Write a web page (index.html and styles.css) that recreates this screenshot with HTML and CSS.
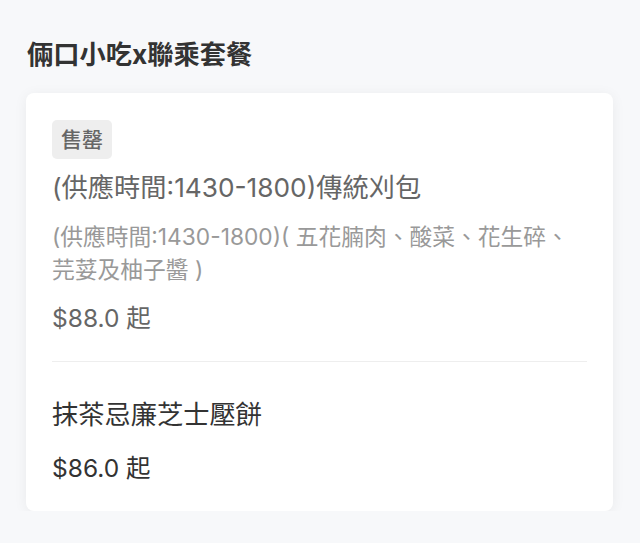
FILE: index.html
```html
<!DOCTYPE html>
<html lang="zh-Hant">
<head>
<meta charset="utf-8">
<link rel="stylesheet" href="styles.css">
</head>
<body>
<main class="page">
  <h1 class="section-title">倆口小吃x聯乘套餐</h1>
  <section class="card">
    <div class="item sold-out">
      <span class="badge">售罄</span>
      <div class="item-title">(供應時間:1430-1800)傳統刈包</div>
      <div class="item-desc">(供應時間:1430-1800)( 五花腩肉、酸菜、花生碎、芫荽及柚子醬 )</div>
      <div class="item-price">$88.0 起</div>
    </div>
    <div class="item">
      <div class="item-title">抹茶忌廉芝士壓餅</div>
      <div class="item-price">$86.0 起</div>
    </div>
  </section>
</main>
</body>
</html>
```

FILE: styles.css
```css
* { box-sizing: border-box; }
html, body {
  margin: 0;
  padding: 0;
  background: #f7f8fa;
  font-family: Inter, "Noto Sans CJK TC", sans-serif;
}
.page {
  padding: 37px 27px 0 26px;
}
.section-title {
  margin: 0;
  font-size: 26.25px;
  line-height: 36px;
  font-weight: 700;
  color: #333;
  padding-left: 1px;
}
.card {
  margin-top: 20px;
  background: #fff;
  border-radius: 8px;
  box-shadow: 0 2px 14px rgba(0, 0, 0, 0.06);
  padding: 0 26px;
}
.item {
  padding: 27px 0 26px;
  display: flex;
  flex-direction: column;
  align-items: flex-start;
}
.item + .item {
  border-top: 1px solid #eeeeee;
}
.badge {
  display: inline-block;
  background: #eeeeee;
  color: #666;
  font-size: 21px;
  line-height: 31px;
  padding: 4px 9px;
  border-radius: 5px;
  font-weight: 500;
  margin-bottom: 3px;
}
.item-title {
  margin-top: 8px;
  font-size: 26.25px;
  line-height: 36px;
  color: #333;
}
.item-desc {
  margin-top: 14px;
  font-size: 22.75px;
  line-height: 33px;
  color: #999;
}
.item-price {
  margin-top: 18px;
  font-size: 24.5px;
  line-height: 34px;
  color: #333;
}
.item-desc + .item-price {
  margin-top: 15px;
}
.sold-out .item-title,
.sold-out .item-price {
  color: #666;
}
```
